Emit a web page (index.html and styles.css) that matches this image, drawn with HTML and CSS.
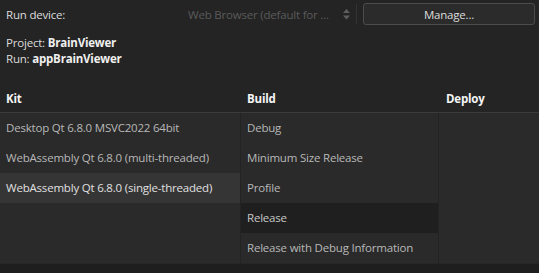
FILE: index.html
```html
<!DOCTYPE html>
<html lang="en">
<head>
    <meta charset="UTF-8">
    <title>Run Settings</title>
    <link rel="stylesheet" href="styles.css">
</head>
<body>
    <!-- Run device row -->
    <div class="device-row">
        <span class="device-label">Run device:</span>
        <div class="combo">
            <span class="combo-text">Web Browser (default for ...</span>
            <svg class="combo-arrows" width="7" height="11" viewBox="0 0 7 11">
                <path d="M3.5 0 L7 4 L0 4 Z" fill="#5e5e5e"/>
                <path d="M0 6.5 L7 6.5 L3.5 10.5 Z" fill="#5e5e5e"/>
            </svg>
            <span class="combo-sep"></span>
        </div>
        <button class="manage-btn">Manage...</button>
    </div>

    <!-- Project info -->
    <div class="info">
        <div>Project: <b>BrainViewer</b></div>
        <div>Run: <b>appBrainViewer</b></div>
    </div>

    <!-- Kit / Build / Deploy table -->
    <div class="table">
        <div class="head">
            <div class="col-kit">Kit</div>
            <div class="col-build">Build</div>
            <div class="col-deploy">Deploy</div>
        </div>
        <div class="body">
            <div class="col-kit list">
                <div class="item">Desktop Qt 6.8.0 MSVC2022 64bit</div>
                <div class="item">WebAssembly Qt 6.8.0 (multi-threaded)</div>
                <div class="item current">WebAssembly Qt 6.8.0 (single-threaded)</div>
            </div>
            <div class="col-build list">
                <div class="item">Debug</div>
                <div class="item">Minimum Size Release</div>
                <div class="item">Profile</div>
                <div class="item selected">Release</div>
                <div class="item">Release with Debug Information</div>
            </div>
            <div class="col-deploy list"></div>
        </div>
    </div>
    <div class="bottom-bar"></div>
</body>
</html>
```

FILE: styles.css
```css
body {
    margin: 0;
    padding: 0;
    width: 539px;
    height: 273px;
    overflow: hidden;
    background: #242424;
    font-family: "Open Sans", "Noto Sans", sans-serif;
    font-size: 11.5px;
    letter-spacing: -0.2px;
    color: #dcdcdc;
}

.device-row {
    display: flex;
    align-items: center;
    height: 22px;
    padding: 3px 4px 0 6px;
}

.device-label {
    width: 176px;
}

.combo {
    display: flex;
    align-items: center;
    box-sizing: border-box;
    width: 175px;
    height: 22px;
    padding-left: 6px;
    color: #5a5a5a;
}

.combo-text {
    flex: 1;
    white-space: nowrap;
    overflow: hidden;
}

.combo-arrows {
    margin-right: 6px;
}

.combo-sep {
    width: 1px;
    height: 20px;
    background: #333;
}

.manage-btn {
    margin-left: 6px;
    width: 172px;
    height: 22px;
    background: #2b2b2b;
    border: 1px solid #4c4c4c;
    border-radius: 3px;
    color: #dcdcdc;
    font-family: inherit;
    font-size: 11.5px;
    letter-spacing: -0.2px;
    padding: 0;
}

.info {
    padding: 10px 6px 0 6px;
    line-height: 16px;
}

.info b {
    color: #f0f0f0;
}

.table {
    margin-top: 21px;
}

.head {
    display: flex;
    box-sizing: border-box;
    height: 25px;
    padding-bottom: 3px;
    align-items: center;
    border-bottom: 1px solid #3a3a3a;
    font-weight: bold;
    color: #f4f4f4;
}

.col-kit {
    width: 240px;
}

.col-build {
    width: 197px;
}

.col-deploy {
    flex: 1;
}

.head .col-kit {
    padding-left: 6px;
    width: 241px;
    box-sizing: border-box;
}

.head .col-build {
    padding-left: 6px;
    box-sizing: border-box;
}

.head .col-deploy {
    padding-left: 8px;
}

.body {
    display: flex;
    height: 150px;
    background: #2a2a2a;
}

.list {
    border-right: 1px solid #232323;
}

.col-deploy.list {
    border-right: none;
}

.item {
    height: 30px;
    line-height: 30px;
    padding-left: 6px;
    color: #b8b8b8;
    white-space: nowrap;
}

.item.current {
    background: #353535;
    color: #e0e0e0;
}

.item.selected {
    background: #1f1f1f;
    color: #c8c8c8;
}

.bottom-bar {
    height: 11px;
    background: #1e1e1e;
    border-top: 1px solid #262626;
}
```
